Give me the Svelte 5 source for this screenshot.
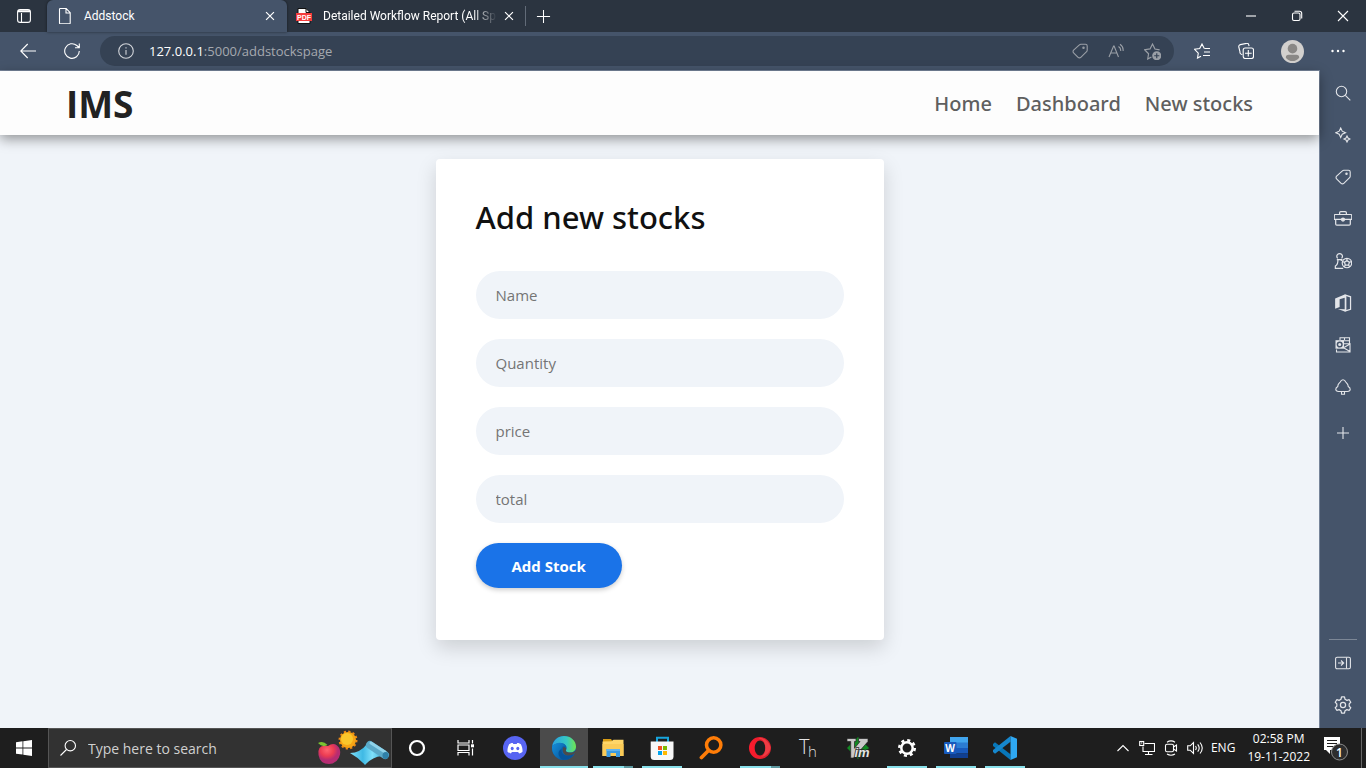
<script>
  const fields = [
    { id: 'name', label: 'Name' },
    { id: 'quantity', label: 'Quantity' },
    { id: 'price', label: 'price' },
    { id: 'total', label: 'total' }
  ];

  const links = ['Home', 'Dashboard', 'New stocks'];

  const icons = {
    tabs: '<rect x="1.6" y="1.6" width="12.8" height="12.8" rx="2.5"/><path d="M2 3.8h12M2 2.8h12M5.5 5v9"/>',
    page: '<path d="M3.5.5h5.700l4 4.200v10.300a.8.8 0 0 1-.8.8H3.300a.8.8 0 0 1-.8-.8V1.300a.8.8 0 0 1 .8-.8zM9 .8v4.200h4"/>',
    close: '<path stroke-width="1.400" d="M3.500 3.500l9 9M12.500 3.500l-9 9"/>',
    plus: '<path d="M8 1v14M1 8h14"/>',
    minimize: '<path d="M3 8h10"/>',
    restore: '<rect x="3.500" y="5" width="7.500" height="7.500" rx="1.500"/><path d="M5.500 3.300h5a2.200 2.200 0 0 1 2.200 2.200v5"/>',
    back: '<path d="M16 8H1M7.700 1L.8 8l6.900 7"/>',
    refresh: '<path d="M15.300 8A7.300 7.300 0 1 1 12.800 2.500l2.300 2M15.300.5v4.300H11"/>',
    info: '<circle cx="8" cy="8" r="7.300"/><path d="M8 7v4.700M8 4.200v1.300"/>',
    tag: '<path d="M8.800 1.200h4.700a1.700 1.700 0 0 1 1.700 1.700v4.300a2 2 0 0 1-.6 1.400l-5.800 5.700a1.900 1.900 0 0 1-2.700 0L1.600 9.900a1.900 1.900 0 0 1 0-2.700l5.800-5.400a2 2 0 0 1 1.400-.6z"/><circle cx="11.500" cy="4.700" r=".7"/>',
    aloud: '<path d="M1 14L5.600 3h.5L10.500 14M2.800 10h6M10.500 3.500Q13 5 12.700 8M12 1.200Q15.600 3.500 15.100 8"/>',
    addFav: '<path d="M14.700 6.500L10.300 5.600 8 1 5.700 5.600.6 6.300l3.700 3.800-.8 5L7 13.200"/><circle cx="12" cy="12" r="4.300" fill="currentColor" stroke="none"/><path d="M9.600 12h4.800M12 9.600v4.800" stroke="#354254"/>',
    favorites: '<path d="M10.300 5.600L8 1 5.700 5.600.6 6.300l3.700 3.800-.8 5L7 13.200M10.500 5.500h5.500M10 9h6M9 12.500h7"/>',
    collections: '<path d="M4.300 11.500l-1-.3a2 2 0 0 1-1.300-2.300L.8 4a2 2 0 0 1 1.500-2.400l6-1.200a2 2 0 0 1 2.400 1.300l.4 1.500"/><rect x="5.200" y="5" width="10.300" height="10.500" rx="2"/><path d="M10.300 7v6.500M7 10.300h6.700"/>',
    more: '<g fill="currentColor" stroke="none"><circle cx="2.500" cy="8" r="1.200"/><circle cx="8" cy="8" r="1.200"/><circle cx="13.500" cy="8" r="1.200"/></g>',
    search: '<circle cx="6.500" cy="6.500" r="5.200"/><path d="M10.300 10.300l5 5"/>',
    sparkle: '<path d="M5.700 1l1.500 3.200 3.300 1.500-3.300 1.500-1.500 3.300-1.500-3.300L.8 5.700l3.400-1.500zM12 9l1 2 2 1-2 1-1 2-1-2-2-1 2-1z"/>',
    toolbox: '<path d="M5 4V2.500Q5 1.500 6 1.500h4q1 0 1 1V4M1.200 4h13.600q1 0 1 1v3.300H.2V5q0-1 1-1zM1.500 8.500v4q0 1 1 1h11q1 0 1-1v-4"/><circle cx="8" cy="8.500" r="1.300" fill="currentColor"/>',
    games: '<path d="M2.500 6.800h5M3.300 5.700a2.500 2.500 0 1 1 3.400 0M3.500 7c0 3-.7 4.500-2.300 5.500v2h7M6.500 7v1"/><circle cx="11.500" cy="9.800" r="4.200"/><path d="M11.500 7.500l2.200 1.600-.8 2.600h-2.800l-.8-2.600zM11.500 5.600v1.900M13.700 9.100l1.900-.6M12.900 11.700l1.200 1.600M10.100 11.700l-1.200 1.600M9.300 9.100l-1.800-.6"/>',
    office: '<path d="M9.500.5l1.500.5v14l-1.500.5-6-2.200 6 .3V3.300l-4.500 1.300v7L1 13.200V4z" fill="currentColor" stroke="none"/><path d="M9.500.8l5.200 1.700v11.200L9.500 15.300"/>',
    outlook: '<path d="M5 3V.8h9.500v6M9.500.8V3M5.500 3.700h9M1.500 12.500V15h13.500V7L9 10.500M9 11l6 3.500M8 6.700h6"/><rect x=".5" y="3.200" width="8.500" height="8.500" fill="currentColor" stroke="none"/><circle cx="4.700" cy="7.500" r="2.300" stroke="#45546a" stroke-width="1.500"/>',
    tree: '<path d="M8 .7Q9.800.7 10.800 3l1.500 1.900q.8 1 .9 2.500c2.800 1.500 2.800 5.100-.7 5.100h-9C0 12.500 0 8.900 2.800 7.400 2.900 5.900 3.200 5.400 3.800 4.700L5.200 3Q6.200.7 8 .7zM6.500 12.700v2.500h3v-2.500"/>',
    thinPlus: '<path d="M8 2v12M2 8h12"/>',
    dock: '<rect x=".6" y="2.300" width="14.800" height="11.400" rx="1.500"/><path d="M11.500 2.500v11M3 8h5.500M6 5.500L8.700 8 6 10.500"/>',
    settings: '<path stroke-linejoin="round" d="M6.700.8h2.600l.5 2.100 1.700 1 2-.6 1.400 2.300L13.500 7v2l1.400 1.400-1.400 2.300-2-.6-1.700 1-.5 2.100H6.700l-.5-2.100-1.700-1-2 .6-1.400-2.300L2.500 9V7L1.100 5.600l1.400-2.300 2 .6 1.700-1z"/><circle cx="8" cy="8" r="2.300"/>',
    chevron: '<path d="M2.500 11L8 5.500l5.500 5.500"/>',
    network: '<path d="M5.500 3.500h10v8H4V6.500M9.500 11.500v3M6 14.500h7.500"/><rect x=".7" y="1.500" width="4" height="4"/><path d="M2 3h1.300"/>',
    meet: '<rect x="2.500" y="4.300" width="8" height="7.500" rx="1.500"/><path d="M10.500 7l3-2v6l-3-2M4 2.200Q8-.5 12 2.200M4 14Q8 16.500 12 14"/>',
    volume: '<path d="M.7 5.800h2.500L6.500 2.500v11L3.200 10.200H.7zM8.500 6q1.500 2 0 4M10.700 4.300q3 3.700 0 7.400M13 2.500q4.500 5.500 0 11"/>'
  };

  const side = ['search', 'sparkle', 'tag', 'toolbox', 'games', 'office', 'outlook', 'tree', 'thinPlus'];
  const sideNames = ['Search', 'Discover', 'Shopping', 'Tools', 'Games', 'Office', 'Outlook', 'Drop', 'Customize'];

  const apps = [
    { name: 'Cortana', art: '<circle cx="12" cy="12" r="7" fill="none" stroke="#fff" stroke-width="2.200"/>' },
    { name: 'Task view', art: '<g fill="none" stroke="#fff" stroke-width="1.200"><path d="M4 4v3h11V4M4 19.500v-3h11v3M4 9h11v5.500H4zM18.500 4v3.500M18.500 12.500v7"/></g><path d="M17 8.300h3v3h-3z" fill="#fff"/>' },
    { name: 'Discord', art: '<circle cx="12" cy="12" r="12" fill="#5865f2"/><path d="M8.500 7l1.300.1.500.9h3.400l.5-.9 1.300-.1 2.400 1.200c1.300 2.500 1.800 5.200 1.600 7.500-1.200 1-2.500 1.500-3.400 1.700l-1-1.500H8.900l-1 1.500c-1-.2-2.200-.7-3.400-1.700-.2-2.300.3-5 1.600-7.500z" fill="#fff"/><ellipse cx="9.200" cy="12.500" rx="1.500" ry="1.700" fill="#5865f2"/><ellipse cx="14.800" cy="12.500" rx="1.500" ry="1.700" fill="#5865f2"/>' },
    { name: 'Edge', active: true, art: '<defs><linearGradient id="eg" x1="0" x2="1"><stop stop-color="#2ca0df"/><stop offset=".6" stop-color="#36c8c4"/><stop offset="1" stop-color="#70e34e"/></linearGradient><linearGradient id="eb" x2="1" y2="1"><stop stop-color="#168fdb"/><stop offset="1" stop-color="#07569b"/></linearGradient></defs><circle cx="12" cy="12" r="12" fill="#0b61ac"/><path d="M.2 10C1.300 4 6.200 0 12 0c7 0 12 5 12 10.500 0 4-3 6-6 6-3.500 0-4.500-1.500-4-2.500C17 9 9 3.500.2 10z" fill="url(#eg)"/><path d="M.1 10.500C4 5 12 6 13 10c-5-1-6 10-.5 14C5 24-.7 18 .1 10.500z" fill="url(#eb)"/><path d="M11.500 11c-2 3-.4 8.500 5 8.800 3 .2 4.500-.8 6.300-2.500l1.200-.3v-3c-1.500 2-3.500 2.600-6 2.500-3.500 0-4.500-1.500-4-2.500.7-1.200.2-2.500-2.500-3z" fill="#4b4b4b"/><path d="M9.500 13c-1 5 4 8.800 12.300 5.300C20 22 15 24.500 11 23.700 5 21 5.500 14.500 9.500 13z" fill="#07549a"/>' },
    { name: 'File Explorer', running: true, grouped: true, art: '<path d="M2 3h8l2 3h-10z" fill="#d89c15"/><path d="M1.500 5.500l9-.2 2-1.500h10V20h-21z" fill="#ffd668"/><path d="M1.500 8h21v12h-21z" fill="#fbcb57"/><path d="M5.500 21v-8h13.500v8h-4v-4h-5.500v4z" fill="#3b9be2"/><path d="M5.500 13h13.500v2H5.500z" fill="#62b4ee"/>' },
    { name: 'Microsoft Store', running: true, art: '<path d="M7 6V1.700h11V6" fill="none" stroke="#17a5dd" stroke-width="2"/><path d="M.7 5.500h22.800v15q0 3.500-3.500 3.500H4.200Q.7 24 .7 20.500z" fill="#f7f7f7"/><path d="M8 10h4v4H8z" fill="#f25022"/><path d="M13 10h4v4h-4z" fill="#7fba00"/><path d="M8 15h4v4H8z" fill="#00a4ef"/><path d="M13 15h4v4h-4z" fill="#ffb900"/>' },
    { name: 'Everything', art: '<circle cx="14.700" cy="9" r="7.200" fill="none" stroke="#ff7d08" stroke-width="3.500"/><path d="M9.500 14.500l-7 7" stroke="#ff7d08" stroke-width="3.800" stroke-linecap="round"/>' },
    { name: 'Opera', running: true, grouped: true, art: '<defs><linearGradient id="op" x2="1"><stop stop-color="#ff1b2d"/><stop offset="1" stop-color="#d4202c"/></linearGradient></defs><path fill="url(#op)" fill-rule="evenodd" d="M12 1a11 11 0 1 0 0 22 11 11 0 0 0 0-22zm0 3.500c3 0 5.300 3.300 5.300 7.500S15 19.500 12 19.500 6.700 16.200 6.700 12 9 4.500 12 4.500z"/><path d="M10.500 2.500C15 .5 21 5 22.500 11c.3 5-5 10-12 10.500 4.500-.5 6.800-4 6.800-9.500s-2.300-9-6.800-9.500z" fill="#f6494e" opacity=".7"/>' },
    { name: 'Thonny', art: '<text x="2" y="18" font-size="20" fill="#e4e4e4" font-family="Open Sans, sans-serif" font-weight="300">T</text><text x="11" y="20.500" font-size="15" fill="#ddd" font-family="Open Sans, sans-serif" font-weight="300">h</text>' },
    { name: 'Vim', art: '<path d="M12 1l11 11-11 11L1 12z" fill="#118922"/><path d="M1 2.500h9v3H8.500v6.800L14 5.500h-1.500v-3H22v3L7.500 22H4.700V5.500H1z" fill="#c9c9c9" stroke="#222" stroke-width=".7"/><text x="8.500" y="21" font-size="13" font-weight="700" font-style="italic" fill="#e4e4e4" stroke="#222" stroke-width="1.500" paint-order="stroke" font-family="Liberation Sans, sans-serif">im</text>' },
    { name: 'Settings', running: true, art: '<g fill="none" stroke="#fff"><circle cx="12" cy="12" r="5.700" stroke-width="2.500"/><circle cx="12" cy="12" r="7.700" stroke-width="2.600" stroke-dasharray="3.020 3.027"/></g>' },
    { name: 'Word', running: true, art: '<path d="M6 1h18v6H6z" fill="#41a5ee"/><path d="M6 6.500h18V12H6z" fill="#2b7cd3"/><path d="M6 12h18v5.500H6z" fill="#185abd"/><path d="M6 17.500h18V22H6z" fill="#103f91"/><rect y="6" width="12.500" height="12" rx="1" fill="#185abd"/><text x="6.200" y="15.500" text-anchor="middle" font-size="10" font-weight="700" fill="#fff" font-family="Open Sans, sans-serif">W</text>' },
    { name: 'Visual Studio Code', running: true, art: '<path d="M0 8l2-1.800 15.500 12V24L0 10z" fill="#0877b9"/><path d="M0 16l2 1.800 15.500-12V0L0 14z" fill="#1687cd"/><path d="M17.500 0L24 2.700v18.600L17.500 24z" fill="#2fa8f2"/>' }
  ];

  const tray = ['chevron', 'network', 'meet', 'volume'];
  const trayNames = ['Show hidden icons', 'Network', 'Meet now', 'Volume'];
</script>

{#snippet icon(name, size = 16)}
  <svg class="icon" width={size} height={size} viewBox="0 0 16 16" aria-hidden="true">{@html icons[name]}</svg>
{/snippet}

<div class="desktop">
  <header class="tabstrip">
    <button class="tab-actions" aria-label="Tab actions">{@render icon('tabs')}</button>
    <div class="tab current">
      {@render icon('page')}
      <span class="tab-title">Addstock</span>
      <button aria-label="Close Addstock">{@render icon('close', 14)}</button>
    </div>
    <div class="tab">
      <svg width="16" height="16" viewBox="0 0 16 16" aria-hidden="true">
        <path d="M2 .5h8l4 4v11H2z" fill="#fff" stroke="#111" />
        <path d="M10 .5v4h4" fill="none" stroke="#111" />
        <rect y="5" width="16" height="8" fill="#f53b3b" />
        <text x="8" y="11.500" text-anchor="middle" font-size="7" font-weight="700" fill="#fff" font-family="Liberation Sans, sans-serif">PDF</text>
      </svg>
      <span class="tab-title fade">Detailed Workflow Report (All Sp</span>
      <button aria-label="Close report">{@render icon('close', 14)}</button>
    </div>
    <button class="new-tab" aria-label="New tab">{@render icon('plus', 15)}</button>
    <div class="window-buttons">
      <button aria-label="Minimize">{@render icon('minimize')}</button>
      <button aria-label="Restore">{@render icon('restore')}</button>
      <button aria-label="Close window">
        <svg class="icon" width="16" height="16" viewBox="0 0 16 16"><path d="M3 3l10 10M13 3L3 13" /></svg>
      </button>
    </div>
  </header>

  <div class="toolbar">
    <button aria-label="Back">{@render icon('back')}</button>
    <button aria-label="Refresh">{@render icon('refresh')}</button>
    <div class="address">
      {@render icon('info')}
      <span class="url"><b>127.0.0.1</b>:5000/addstockspage</span>
      <button aria-label="Shopping">{@render icon('tag')}</button>
      <button aria-label="Read aloud">{@render icon('aloud')}</button>
      <button aria-label="Add to favorites">{@render icon('addFav', 17)}</button>
    </div>
    <button aria-label="Favorites">{@render icon('favorites')}</button>
    <button aria-label="Collections">{@render icon('collections')}</button>
    <button class="profile" aria-label="Profile">
      <svg width="23" height="23" viewBox="0 0 24 24">
        <circle cx="12" cy="12" r="12" fill="#d2d0ce" />
        <circle cx="12" cy="9" r="5" fill="#8a8886" />
        <path d="M5 18.500Q5 15.500 8 15.500h8q3 0 3 3-3 3.500-7 3.500t-7-3.500z" fill="#8a8886" />
      </svg>
    </button>
    <button aria-label="More">{@render icon('more')}</button>
  </div>

  <div class="body">
    <main class="site">
      <nav>
        <a class="brand" href="#ims">IMS</a>
        <ul>
          {#each links as link}
            <li><a href="#{link}">{link}</a></li>
          {/each}
        </ul>
      </nav>
      <form class="card" onsubmit={(e) => e.preventDefault()}>
        <h1>Add new stocks</h1>
        {#each fields as field}
          <input id={field.id} name={field.id} type="text" placeholder={field.label} aria-label={field.label} />
        {/each}
        <button type="submit">Add Stock</button>
      </form>
    </main>

    <aside class="sidebar">
      {#each side as name, i}
        <button class:customize={name === 'thinPlus'} aria-label={sideNames[i]}>
          {@render icon(name, name === 'games' || name === 'toolbox' || name === 'office' ? 18 : 16)}
        </button>
      {/each}
      <hr />
      <button aria-label="Hide sidebar">{@render icon('dock')}</button>
      <button aria-label="Settings">{@render icon('settings', 18)}</button>
    </aside>
  </div>

  <footer class="taskbar">
    <button class="start" aria-label="Start">
      <svg width="16" height="16" viewBox="0 0 16 16" fill="#fff">
        <path d="M0 2.200l6.500-.9v6.200H0zM7.300 1.200L16 0v7.500H7.300zM0 8.400h6.500v6.200L0 13.700zM7.300 8.400H16V16l-8.700-1.200z" />
      </svg>
    </button>
    <label class="search">
      <svg class="icon" width="18" height="18" viewBox="0 0 18 18"><circle cx="11.300" cy="6.700" r="5.200" /><path d="M7.500 10.500L1.500 16.500" /></svg>
      <input type="text" placeholder="Type here to search" aria-label="Type here to search" />
      <svg width="73" height="36" viewBox="0 0 73 36" aria-hidden="true">
        <defs>
          <radialGradient id="apple" cx=".4" cy=".3"><stop stop-color="#ff6470" /><stop offset=".6" stop-color="#ec3c52" /><stop offset="1" stop-color="#b62c72" /></radialGradient>
          <linearGradient id="mat" x2="1"><stop stop-color="#7fe0fa" /><stop offset=".4" stop-color="#3fb9e4" /><stop offset=".7" stop-color="#7fe0fa" /><stop offset="1" stop-color="#46b4dc" /></linearGradient>
        </defs>
        <path d="M11 16Q16 12.500 20 15.500q4 3 3 9-2 9-11 9.500Q3 34 1.500 25 0 14 11 16z" fill="url(#apple)" />
        <path d="M1 13q5-3 9.500 2-5 3-9.500-2z" fill="#7bc331" />
        <circle cx="31" cy="10" r="8.500" fill="none" stroke="#f18a13" stroke-width="2" stroke-dasharray="2.200 2.250" />
        <circle cx="31" cy="10" r="8" fill="#f7a515" />
        <circle cx="30" cy="9" r="6" fill="#fac62b" />
        <path d="M33 23q10 0 17-9l15 12q-10 1-17 9-6-7-15-12z" fill="url(#mat)" />
        <path d="M53 15l15 10" stroke="#5aa9c8" stroke-width="8" stroke-linecap="round" />
        <path d="M54 13l14 9" stroke="#8fd3ea" stroke-width="3" stroke-linecap="round" />
        <ellipse cx="68.500" cy="25.500" rx="3" ry="3.500" fill="#2f80a8" />
      </svg>
    </label>
    <div class="apps">
      {#each apps as app}
        <button class:active={app.active} class:running={app.running} class:grouped={app.grouped} aria-label={app.name}>
          <svg width="24" height="24" viewBox="0 0 24 24">{@html app.art}</svg>
        </button>
      {/each}
    </div>
    <div class="tray">
      {#each tray as name, i}
        <button aria-label={trayNames[i]}>{@render icon(name)}</button>
      {/each}
      <span class="lang">ENG</span>
      <div class="clock"><span>02:58 PM</span><span>19-11-2022</span></div>
      <button class="notices" aria-label="1 notification">
        <svg width="28" height="28" viewBox="0 0 28 28">
          <path d="M2 3h16v13H8v4l-4-4H2z" fill="#fff" />
          <path d="M5 6.500h10M5 9.500h10M5 12.500h6" stroke="#1e1e1e" />
          <circle cx="17.500" cy="18" r="8" fill="#2d2d2d" stroke="#8c8c8c" />
          <text x="17.500" y="22.500" text-anchor="middle" font-size="12" font-weight="600" fill="#fff" font-family="Open Sans, sans-serif">1</text>
        </svg>
      </button>
      <button class="show-desktop" aria-label="Show desktop"></button>
    </div>
  </footer>
</div>

<style>
  :global(body) {
    margin: 0;
  }

  .desktop,
  .desktop * {
    box-sizing: border-box;
  }

  .desktop {
    display: flex;
    flex-direction: column;
    min-height: 100vh;
    font-family: 'Open Sans', 'Noto Sans', sans-serif;
    font-size: 12px;
    color: #fff;
    background: #45546a;
  }

  button {
    display: flex;
    align-items: center;
    justify-content: center;
    flex: none;
    padding: 0;
    border: 0;
    color: inherit;
    background: none;
    font: inherit;
  }

  svg {
    display: block;
    flex: none;
  }

  .icon {
    fill: none;
    stroke: currentColor;
    stroke-width: 1.1;
  }

  .tabstrip {
    display: flex;
    height: 32px;
    background: #2b3440;
  }

  .tab-actions {
    width: 47px;
  }

  .tab {
    display: flex;
    align-items: center;
    width: 238px;
    padding: 0 8px 0 9px;
  }

  .tab.current {
    width: 240px;
    padding: 0 9px 0 10px;
    border-radius: 6px 6px 0 0;
    background: #45546a;
    box-shadow: 0 0 3px rgba(0, 0, 0, 0.5);
  }

  .tab-title {
    flex: 1;
    min-width: 0;
    margin-left: 11px;
    overflow: hidden;
    white-space: nowrap;
    font-family: Roboto, 'Open Sans', sans-serif;
    font-size: 12px;
    line-height: 16px;
  }

  .fade {
    mask-image: linear-gradient(90deg, #000 86%, transparent);
  }

  .tab button {
    width: 16px;
    height: 24px;
    margin-left: 4px;
  }

  .new-tab {
    width: 36px;
    height: 20px;
    margin-top: 6px;
    border-left: 1px solid #626b78;
  }

  .window-buttons {
    display: flex;
    margin-left: auto;
  }

  .window-buttons button {
    width: 46px;
  }

  .toolbar {
    display: flex;
    align-items: center;
    height: 38px;
    padding: 0 6px;
  }

  .toolbar > button {
    width: 44px;
    height: 32px;
  }

  .toolbar > button:nth-child(4) {
    margin-left: 6px;
  }

  .toolbar > .profile {
    width: 48px;
  }

  .address {
    display: flex;
    flex: 1;
    align-items: center;
    height: 30px;
    margin-left: 6px;
    padding: 0 4px 0 18px;
    border-radius: 15px;
    color: #9a9fa6;
    background: #354254;
  }

  .address > :global(svg) {
    color: #d2d5da;
  }

  .address button {
    width: 36px;
    height: 28px;
  }

  .url {
    flex: 1;
    margin-left: 15px;
    font-size: 13px;
    line-height: 18px;
    color: #a5a9af;
  }

  .url b {
    font-weight: 400;
    color: #fff;
  }

  .body {
    display: flex;
    flex: 1;
  }

  .site {
    flex: 1;
    border-top: 1px solid #76849a;
    background: #f0f4f9;
  }

  nav {
    position: relative;
    display: flex;
    align-items: center;
    justify-content: space-between;
    height: 64px;
    padding: 2px 5% 0;
    background: #fdfdfd;
    box-shadow: 0 4px 12px rgba(0, 0, 0, 0.4);
  }

  nav a {
    color: #5f5f5f;
    text-decoration: none;
    font-family: 'Noto Sans', 'Open Sans', sans-serif;
    font-size: 20px;
    font-weight: 500;
    line-height: 28px;
  }

  nav .brand {
    color: #222;
    font-family: 'Open Sans', sans-serif;
    font-size: 37px;
    font-weight: 700;
    line-height: 48px;
  }

  nav ul {
    display: flex;
    gap: 24px;
    margin: 0;
    padding: 0;
    list-style: none;
  }

  .card {
    display: flex;
    flex-direction: column;
    gap: 20px;
    width: 448px;
    max-width: 100%;
    margin: 24px auto;
    padding: 36px 40px 52px;
    border-radius: 4px;
    background: #fff;
    box-shadow: 0 8px 20px rgba(0, 0, 0, 0.15);
  }

  .card h1 {
    margin: 0 0 12px;
    color: #111;
    font-family: 'Noto Sans', 'Open Sans', sans-serif;
    font-size: 31px;
    font-weight: 500;
    line-height: 44px;
  }

  .card input {
    width: 100%;
    height: 48px;
    padding: 0 20px;
    border: 0;
    border-radius: 24px;
    color: #333;
    background: #f0f4f9;
    font: 15px 'Open Sans', sans-serif;
  }

  .card input::placeholder {
    color: #757575;
  }

  .card button {
    align-self: flex-start;
    height: 45px;
    padding: 0 36px;
    border-radius: 23px;
    background: #1a73e8;
    box-shadow: 0 2px 5px rgba(0, 0, 0, 0.2);
    font-size: 15px;
    font-weight: 700;
  }

  .sidebar {
    display: flex;
    flex-direction: column;
    width: 47px;
    padding: 2px 0;
    border-left: 1px solid #76849a;
    color: #e3e5e9;
  }

  .sidebar button {
    height: 42px;
  }

  .sidebar .customize {
    margin-top: 4px;
  }

  .sidebar hr {
    width: 28px;
    height: 1px;
    margin: auto auto 2px;
    border: 0;
    background: #7c8796;
  }

  .taskbar {
    display: flex;
    height: 40px;
    background: #1e1e1e;
  }

  .start {
    width: 48px;
  }

  .search {
    display: flex;
    align-items: center;
    width: 344px;
    padding: 0 1px 0 10px;
    border: 1px solid #555;
    background: #323232;
  }

  .search input {
    flex: 1;
    min-width: 0;
    margin-left: 11px;
    padding: 0;
    border: 0;
    color: #fff;
    background: none;
    font: 14px 'Open Sans', sans-serif;
  }

  .search input::placeholder {
    color: #d0d0d0;
  }

  .apps {
    display: flex;
    gap: 1px;
    margin-left: 1px;
  }

  .apps button {
    width: 48px;
    border-bottom: 2px solid transparent;
    padding-top: 2px;
  }

  .apps .active {
    border-color: #88e0ea;
    background: #4b4b4b;
  }

  .apps .running {
    background: linear-gradient(#88e0ea, #88e0ea) bottom / 40px 2px no-repeat border-box;
  }

  .apps .grouped {
    background:
      linear-gradient(90deg, transparent 35px, #5c979e 35px 44px, transparent 44px) bottom / 100% 2px no-repeat border-box,
      linear-gradient(#88e0ea, #88e0ea) bottom / 40px 2px no-repeat border-box;
  }

  .tray {
    display: flex;
    align-items: center;
    margin-left: auto;
    line-height: 18px;
  }

  .tray button {
    width: 24px;
    height: 40px;
  }

  .lang {
    margin: 0 12px 0 4px;
  }

  .clock {
    display: flex;
    flex-direction: column;
    align-items: center;
  }

  .tray .notices {
    width: 51px;
  }

  .tray .show-desktop {
    width: 5px;
    border-left: 1px solid #666;
  }
</style>
